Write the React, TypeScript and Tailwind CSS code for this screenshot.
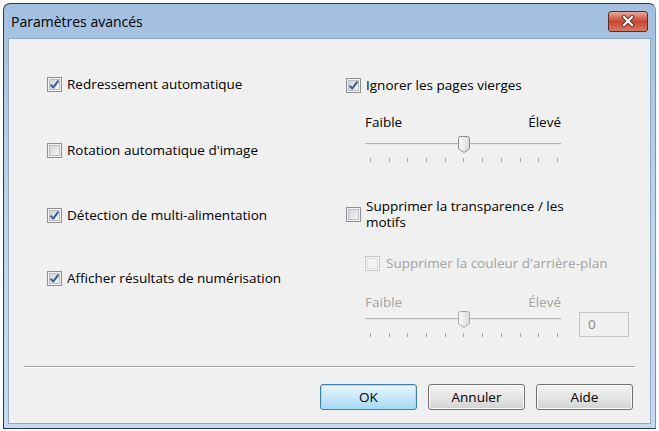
import React from "react";

const font = { fontFamily: '"Open Sans", "Noto Sans", sans-serif' };

const CheckBox = ({ checked, disabled }: { checked?: boolean; disabled?: boolean }) => (
  <svg width="15" height="15" viewBox="0 0 15 15" className="shrink-0">
    <defs>
      <linearGradient id="cbfill" x1="0" y1="0" x2="1" y2="1">
        <stop offset="0" stopColor="#cfd3d9" />
        <stop offset="1" stopColor="#f6f7f8" />
      </linearGradient>
    </defs>
    <rect x="0.5" y="0.5" width="14" height="14" fill="#f4f4f4" stroke={disabled ? "#c9c9c9" : "#8e8f8f"} />
    <rect
      x="2.5"
      y="2.5"
      width="10"
      height="10"
      fill={disabled ? "#f2f2f2" : "url(#cbfill)"}
      stroke={disabled ? "#dedede" : "#b9bdc3"}
    />
    {checked && (
      <path d="M3.6 7.6 L6.2 10.6 L11.4 3.6" fill="none" stroke="#3d5a9e" strokeWidth="2" strokeLinejoin="round" />
    )}
  </svg>
);

const Check = ({ label, checked }: { label: string; checked?: boolean }) => (
  <div className="flex items-center gap-[5px] h-[15px]">
    <CheckBox checked={checked} />
    <span className="text-[13.5px] leading-none text-black whitespace-nowrap">{label}</span>
  </div>
);

const Slider = ({ dim }: { dim?: boolean }) => (
  <div className="w-[196px]">
    <div className="relative h-[16px]">
      <div className="absolute left-0 right-0 top-[7px] h-[1px] bg-[#b4b4b4]" />
      <div className="absolute left-0 right-0 top-[8px] h-[1px] bg-[#e6e6e6]" />
      <svg width="12" height="17" viewBox="0 0 12 17" className="absolute left-[93px] top-0">
        <defs>
          <linearGradient id="thumb" x1="0" y1="0" x2="1" y2="0">
            <stop offset="0" stopColor="#fafafa" />
            <stop offset="1" stopColor="#dadada" />
          </linearGradient>
        </defs>
        <path
          d="M2.5 0.5 H9.5 Q11.5 0.5 11.5 2.5 V12.5 L6 16.5 L0.5 12.5 V2.5 Q0.5 0.5 2.5 0.5 Z"
          fill="url(#thumb)"
          stroke={dim ? "#a8a8a8" : "#8a8a8a"}
        />
      </svg>
    </div>
    <div className="flex justify-between pl-[5px] pr-[3px] mt-[6px]">
      {Array.from({ length: 11 }).map((_, i) => (
        <div key={i} className="w-[1px] h-[4px] bg-[#a9a9a9]" />
      ))}
    </div>
  </div>
);

const Button = ({ label, primary }: { label: string; primary?: boolean }) => (
  <div
    className={
      primary
        ? "w-[97px] h-[26px] rounded-[3px] border border-[#3c7fb1] bg-gradient-to-b from-[#eaf6fd] to-[#a7d9f5] shadow-[inset_0_0_0_1px_#9fe0ff] flex items-center justify-center text-[13.5px] text-black"
        : "w-[97px] h-[26px] rounded-[3px] border border-[#707070] bg-gradient-to-b from-[#f2f2f2] via-[#e6e6e6] to-[#d2d2d2] shadow-[inset_0_0_0_1px_#fcfcfc] flex items-center justify-center text-[13.5px] text-black"
    }
  >
    {label}
  </div>
);

export default function App() {
  return (
    <div className="w-[659px] h-[431px] bg-white pt-[3px] pl-[3px]" style={font}>
      <div className="w-[653px] h-[426px] rounded-t-[7px] border border-[#2f3a46] border-r-[#7d93ad] bg-gradient-to-b from-[#a2bfe1] via-[#bfd5ed] to-[#c6daf0] flex flex-col">
        {/* title bar */}
        <div className="h-[34px] flex items-center justify-between pl-[7px] pr-[7px]">
          <span className="text-[14px] text-black">Paramètres avancés</span>
          <div className="w-[40px] h-[21px] rounded-[3px] border border-[#5b2a22] bg-gradient-to-b from-[#e8a89a] via-[#c9452f] to-[#d9775d] flex items-center justify-center">
            <svg width="14" height="12" viewBox="0 0 14 12">
              <path d="M3 2 L11 10 M11 2 L3 10" stroke="#5a2b25" strokeWidth="4" strokeLinecap="square" />
              <path d="M3 2 L11 10 M11 2 L3 10" stroke="#ffffff" strokeWidth="2.2" strokeLinecap="square" />
            </svg>
          </div>
        </div>

        {/* client area */}
        <div className="mx-[4px] mb-[4px] flex-1 bg-[#f0f0f0] border border-[#8fa8c6] flex flex-col">
          <div className="h-[327px] flex">
            {/* left column */}
            <div className="w-[337px] pl-[38px] pt-[38px] flex flex-col">
              <Check label="Redressement automatique" checked />
              <div className="mt-[51px]">
                <Check label="Rotation automatique d'image" />
              </div>
              <div className="mt-[50px]">
                <Check label="Détection de multi-alimentation" checked />
              </div>
              <div className="mt-[48px]">
                <Check label="Afficher résultats de numérisation" checked />
              </div>
            </div>

            {/* right column */}
            <div className="flex-1 pt-[39px] flex flex-col">
              <Check label="Ignorer les pages vierges" checked />
              <div className="ml-[19px] mt-[21px] w-[196px] flex justify-between text-[13.5px] text-black leading-[16px]">
                <span>Faible</span>
                <span>Élevé</span>
              </div>
              <div className="ml-[19px] mt-[6px]">
                <Slider />
              </div>
              <div className="mt-[36px] flex items-center gap-[5px]">
                <CheckBox />
                <span className="text-[13.5px] leading-[16px] text-black w-[210px]">
                  Supprimer la transparence / les motifs
                </span>
              </div>
              <div className="ml-[19px] mt-[26px] flex items-center gap-[6px] h-[15px]">
                <CheckBox disabled />
                <span className="text-[13.5px] leading-none text-[#a3a3a3] whitespace-nowrap">
                  Supprimer la couleur d'arrière-plan
                </span>
              </div>
              <div className="ml-[19px] mt-[23px] w-[196px] flex justify-between text-[13.5px] text-[#a3a3a3] leading-[16px]">
                <span>Faible</span>
                <span>Élevé</span>
              </div>
              <div className="ml-[19px] mt-[1px] flex items-start gap-[18px]">
                <Slider dim />
                <div className="w-[50px] h-[25px] mt-[1px] border border-[#c2c5ca] bg-[#f0f0f0] flex items-center pl-[8px] text-[13.5px] text-[#8a8a8a]">
                  0
                </div>
              </div>
            </div>
          </div>

          {/* separator */}
          <div className="mx-[15px] h-[1px] bg-[#a0a0a0]" />
          <div className="mx-[15px] h-[1px] bg-white" />

          {/* buttons */}
          <div className="mt-[16px] pr-[17px] flex justify-end gap-[11px]">
            <Button label="OK" primary />
            <Button label="Annuler" />
            <Button label="Aide" />
          </div>
        </div>
      </div>
    </div>
  );
}
